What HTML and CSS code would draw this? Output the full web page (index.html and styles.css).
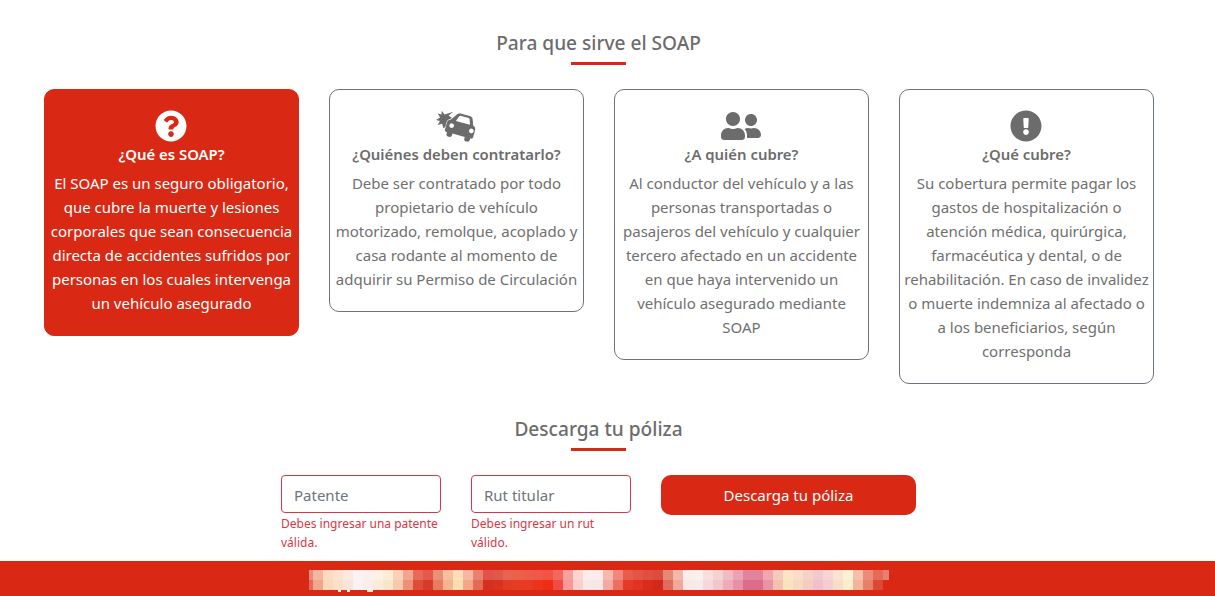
FILE: index.html
```html
<!DOCTYPE html>
<html lang="es">
<head>
<meta charset="utf-8">
<title>SOAP</title>
<link rel="stylesheet" href="styles.css">
</head>
<body>
<main class="page">
  <section class="usage">
    <h2 class="section-title">Para que sirve el SOAP</h2>
    <div class="cards">
      <article class="card card-active">
        <svg class="icon icon-round" viewBox="0 0 512 512" aria-hidden="true"><path d="M504 256c0 136.997-111.043 248-248 248S8 392.997 8 256C8 119.083 119.043 8 256 8s248 111.083 248 248zM262.655 90c-54.497 0-89.255 22.957-116.549 63.758-3.536 5.286-2.353 12.415 2.715 16.258l34.699 26.31c5.205 3.947 12.621 3.008 16.665-2.122 17.864-22.658 30.113-35.797 57.303-35.797 20.429 0 45.698 13.148 45.698 32.958 0 14.976-12.363 22.667-32.534 33.976C247.128 238.528 216 254.941 216 296v4c0 6.627 5.373 12 12 12h56c6.627 0 12-5.373 12-12v-1.333c0-28.462 83.186-29.647 83.186-106.667 0-58.002-60.165-102-116.531-102zM256 338c-25.365 0-46 20.635-46 46 0 25.364 20.635 46 46 46s46-20.636 46-46c0-25.365-20.635-46-46-46z"/></svg>
        <h3 class="card-title">¿Qué es SOAP?</h3>
        <p class="card-text">El SOAP es un seguro obligatorio,<br>que cubre la muerte y lesiones<br>corporales que sean consecuencia<br>directa de accidentes sufridos por<br>personas en los cuales intervenga<br>un vehículo asegurado</p>
      </article>
      <article class="card">
        <svg class="icon icon-wide" viewBox="0 0 40 32" aria-hidden="true">
          <polygon points="5.7,0.7 8.6,4.6 17.3,1.7 12.6,5.6 16,8 13,9.5 10.4,13 10.8,16 7.3,18.3 6.2,13.8 1.6,15 4,11 0,10 4,7.500 1.800,3.400 5.500,4.500"/>
          <g transform="translate(.6 0) rotate(15 25 18)"><path fill-rule="evenodd" d="M16.4 7.2C17 5.3 18.400 4.400 20.200 4.400h9.600c1.800 0 3.200.9 3.800 2.800l1.900 5.400c2 .6 3.100 2.200 3.100 4.200v7.200c0 1-.8 1.800-1.800 1.800h-.8v2c0 1.100-.9 2-2 2h-1.600c-1.100 0-2-.9-2-2v-2H17.600v2c0 1.100-.9 2-2 2H14c-1.100 0-2-.9-2-2v-2h-.8c-1 0-1.800-.8-1.800-1.800v-7.200c0-2 1.100-3.600 3.100-4.200zM19.600 7.300l-1.900 5.400h14.600l-1.900-5.400c-.2-.5-.6-.8-1.100-.8h-8.600c-.5 0-.9.3-1.100.8zM14.800 16a2.300 2.300 0 1 0 0 4.600 2.300 2.300 0 0 0 0-4.600zM35.200 16a2.300 2.300 0 1 0 0 4.600 2.300 2.300 0 0 0 0-4.600z"/></g>
        </svg>
        <h3 class="card-title">¿Quiénes deben contratarlo?</h3>
        <p class="card-text">Debe ser contratado por todo<br>propietario de vehículo<br>motorizado, remolque, acoplado y<br>casa rodante al momento de<br>adquirir su Permiso de Circulación</p>
      </article>
      <article class="card">
        <svg class="icon icon-wide" viewBox="0 0 640 512" aria-hidden="true"><path d="M192 256c61.9 0 112-50.1 112-112S253.9 32 192 32 80 82.1 80 144s50.1 112 112 112zm76.8 32h-8.3c-20.8 10-43.9 16-68.5 16s-47.6-6-68.5-16h-8.3C51.6 288 0 339.6 0 403.2V432c0 26.5 21.5 48 48 48h288c26.5 0 48-21.5 48-48v-28.8c0-63.6-51.6-115.2-115.2-115.2zM480 256c53 0 96-43 96-96s-43-96-96-96-96 43-96 96 43 96 96 96zm48 32h-3.8c-13.9 4.8-28.6 8-44.2 8s-30.3-3.2-44.2-8H432c-20.4 0-39.2 5.9-55.7 15.4 24.4 26.3 39.7 61.2 39.7 99.8v38.4c0 2.2-.5 4.3-.6 6.4H592c26.5 0 48-21.5 48-48 0-61.9-50.1-112-112-112z"/></svg>
        <h3 class="card-title">¿A quién cubre?</h3>
        <p class="card-text">Al conductor del vehículo y a las<br>personas transportadas o<br>pasajeros del vehículo y cualquier<br>tercero afectado en un accidente<br>en que haya intervenido un<br>vehículo asegurado mediante<br>SOAP</p>
      </article>
      <article class="card">
        <svg class="icon icon-round" viewBox="0 0 512 512" aria-hidden="true"><path d="M504 256c0 136.997-111.043 248-248 248S8 392.997 8 256C8 119.083 119.043 8 256 8s248 111.083 248 248zm-248 50c-25.405 0-46 20.595-46 46s20.595 46 46 46 46-20.595 46-46-20.595-46-46-46zm-43.673-165.346l7.418 136c.347 6.364 5.609 11.346 11.982 11.346h48.546c6.373 0 11.635-4.982 11.982-11.346l7.418-136c.375-6.874-5.098-12.654-11.982-12.654h-63.383c-6.884 0-12.356 5.78-11.981 12.654z"/></svg>
        <h3 class="card-title">¿Qué cubre?</h3>
        <p class="card-text">Su cobertura permite pagar los<br>gastos de hospitalización o<br>atención médica, quirúrgica,<br>farmacéutica y dental, o de<br>rehabilitación. En caso de invalidez<br>o muerte indemniza al afectado o<br>a los beneficiarios, según<br>corresponda</p>
      </article>
    </div>
  </section>
  <section class="download">
    <h2 class="section-title">Descarga tu póliza</h2>
    <form class="download-form">
      <div class="field">
        <input class="field-input" type="text" placeholder="Patente">
        <p class="field-error">Debes ingresar una patente válida.</p>
      </div>
      <div class="field">
        <input class="field-input" type="text" placeholder="Rut titular">
        <p class="field-error">Debes ingresar un rut válido.</p>
      </div>
      <button class="download-button" type="button">Descarga tu póliza</button>
    </form>
  </section>
</main>
<footer class="footer">
  <svg class="footer-blur" viewBox="0 0 580 23" aria-hidden="true" shape-rendering="crispEdges">
    <g>
    <rect x="0" width="4" height="10" fill="#e88c7e"/><rect x="4" width="10" height="10" fill="#f4b6a0"/><rect x="14" width="10" height="10" fill="#fbdcc0"/><rect x="24" width="10" height="10" fill="#fde2d0"/><rect x="34" width="10" height="10" fill="#fbeae2"/><rect x="44" width="10" height="10" fill="#faf3f4"/><rect x="54" width="10" height="10" fill="#faf0ef"/><rect x="64" width="10" height="10" fill="#fdf0e4"/><rect x="74" width="10" height="10" fill="#fdecd6"/><rect x="84" width="10" height="10" fill="#f9d0b8"/><rect x="94" width="10" height="10" fill="#f2a590"/><rect x="104" width="10" height="10" fill="#e66a58"/><rect x="114" width="10" height="10" fill="#e35a4c"/><rect x="124" width="10" height="10" fill="#ea9078"/><rect x="134" width="10" height="10" fill="#f6c0a0"/><rect x="144" width="10" height="10" fill="#fde0b8"/><rect x="154" width="10" height="10" fill="#f6b8a0"/><rect x="164" width="10" height="10" fill="#ea8070"/><rect x="174" width="10" height="10" fill="#e0524a"/><rect x="184" width="10" height="10" fill="#e05a4c"/><rect x="194" width="10" height="10" fill="#e86450"/><rect x="204" width="10" height="10" fill="#ea6048"/><rect x="214" width="10" height="10" fill="#ec5c48"/><rect x="224" width="10" height="10" fill="#f0584a"/><rect x="234" width="10" height="10" fill="#f25442"/><rect x="244" width="10" height="10" fill="#f06860"/><rect x="254" width="10" height="10" fill="#f8a0a0"/><rect x="264" width="10" height="10" fill="#fcd4d0"/><rect x="274" width="10" height="10" fill="#fdeeea"/><rect x="284" width="10" height="10" fill="#fdeceb"/><rect x="294" width="10" height="10" fill="#f7b9ae"/><rect x="304" width="10" height="10" fill="#f0897c"/><rect x="314" width="10" height="10" fill="#e95c4a"/><rect x="324" width="10" height="10" fill="#e35644"/><rect x="334" width="10" height="10" fill="#e05040"/><rect x="344" width="10" height="10" fill="#dc4c3c"/><rect x="354" width="10" height="10" fill="#e68a78"/><rect x="364" width="10" height="10" fill="#f2b8aa"/><rect x="374" width="10" height="10" fill="#fbeeea"/><rect x="384" width="10" height="10" fill="#faf0ee"/><rect x="394" width="10" height="10" fill="#f9dde0"/><rect x="404" width="10" height="10" fill="#f5d2d2"/><rect x="414" width="10" height="10" fill="#f0bcc4"/><rect x="424" width="10" height="10" fill="#eba2b4"/><rect x="434" width="10" height="10" fill="#e2849c"/><rect x="444" width="10" height="10" fill="#e2849c"/><rect x="454" width="10" height="10" fill="#efa8b0"/><rect x="464" width="10" height="10" fill="#f6cabc"/><rect x="474" width="10" height="10" fill="#fde6c8"/><rect x="484" width="10" height="10" fill="#fadcc8"/><rect x="494" width="10" height="10" fill="#f7d2c8"/><rect x="504" width="10" height="10" fill="#f4c8d0"/><rect x="514" width="10" height="10" fill="#f8d4d4"/><rect x="524" width="10" height="10" fill="#fce2d0"/><rect x="534" width="10" height="10" fill="#fef0d4"/><rect x="544" width="10" height="10" fill="#f4c0a8"/><rect x="554" width="10" height="10" fill="#ec8c78"/><rect x="564" width="10" height="10" fill="#e66a58"/><rect x="574" width="6" height="10" fill="#e88070"/>
    </g>
    <g transform="translate(0 10)">
    <rect x="0" width="4" height="10" fill="#e6695a"/><rect x="4" width="10" height="10" fill="#f2a68e"/><rect x="14" width="10" height="10" fill="#fad9b8"/><rect x="24" width="10" height="10" fill="#fcdfc8"/><rect x="34" width="10" height="10" fill="#f9e4dc"/><rect x="44" width="10" height="10" fill="#f9f1f2"/><rect x="54" width="10" height="10" fill="#f8eeec"/><rect x="64" width="10" height="10" fill="#fcebdc"/><rect x="74" width="10" height="10" fill="#fce4cc"/><rect x="84" width="10" height="10" fill="#f8c8ac"/><rect x="94" width="10" height="10" fill="#ee9078"/><rect x="104" width="10" height="10" fill="#dd4e38"/><rect x="114" width="10" height="10" fill="#d63a28"/><rect x="124" width="10" height="10" fill="#e87c60"/><rect x="134" width="10" height="10" fill="#f5b490"/><rect x="144" width="10" height="10" fill="#fcdcb0"/><rect x="154" width="10" height="10" fill="#f3a688"/><rect x="164" width="10" height="10" fill="#e46a56"/><rect x="174" width="10" height="10" fill="#d4301f"/><rect x="184" width="10" height="10" fill="#d83220"/><rect x="194" width="10" height="10" fill="#e23c24"/><rect x="204" width="10" height="10" fill="#e63c24"/><rect x="214" width="10" height="10" fill="#e83a24"/><rect x="224" width="10" height="10" fill="#ee3418"/><rect x="234" width="10" height="10" fill="#f02c14"/><rect x="244" width="10" height="10" fill="#ee4c44"/><rect x="254" width="10" height="10" fill="#f89898"/><rect x="264" width="10" height="10" fill="#fbd0cc"/><rect x="274" width="10" height="10" fill="#fbe8e4"/><rect x="284" width="10" height="10" fill="#fce6e2"/><rect x="294" width="10" height="10" fill="#f6a9a0"/><rect x="304" width="10" height="10" fill="#ee6f62"/><rect x="314" width="10" height="10" fill="#e63a28"/><rect x="324" width="10" height="10" fill="#e23222"/><rect x="334" width="10" height="10" fill="#d92c1c"/><rect x="344" width="10" height="10" fill="#d42818"/><rect x="354" width="10" height="10" fill="#e16b5c"/><rect x="364" width="10" height="10" fill="#f0a89c"/><rect x="374" width="10" height="10" fill="#f9e8e4"/><rect x="384" width="10" height="10" fill="#f8eaea"/><rect x="394" width="10" height="10" fill="#f8d6da"/><rect x="404" width="10" height="10" fill="#f3c6ca"/><rect x="414" width="10" height="10" fill="#eeacb8"/><rect x="424" width="10" height="10" fill="#e890a8"/><rect x="434" width="10" height="10" fill="#dc6c8c"/><rect x="444" width="10" height="10" fill="#dc6c8c"/><rect x="454" width="10" height="10" fill="#e894a4"/><rect x="464" width="10" height="10" fill="#f5c0ae"/><rect x="474" width="10" height="10" fill="#fde2c0"/><rect x="484" width="10" height="10" fill="#f8d8c0"/><rect x="494" width="10" height="10" fill="#f6ccc0"/><rect x="504" width="10" height="10" fill="#f2c0cc"/><rect x="514" width="10" height="10" fill="#f6ccd0"/><rect x="524" width="10" height="10" fill="#fbdcc8"/><rect x="534" width="10" height="10" fill="#fdeccc"/><rect x="544" width="10" height="10" fill="#f2b49c"/><rect x="554" width="10" height="10" fill="#e88068"/><rect x="564" width="10" height="10" fill="#dd4836"/>
    </g>
    <rect x="29" y="20" width="3" height="1.5" fill="#fbe9c8"/><rect x="38" y="20" width="3" height="1.5" fill="#fbe9c8"/><rect x="58" y="20" width="6" height="1.5" fill="#fbe9c8"/>
  </svg>
</footer>
</body>
</html>
```
FILE: styles.css
```css
* { box-sizing: border-box; }
html, body { margin: 0; padding: 0; }
body {
  font-family: "Noto Sans", "Open Sans", sans-serif;
  font-size: 15px;
  line-height: 24px;
  color: #707070;
  background: #fff;
  height: 596px;
  overflow: hidden;
  display: flex;
  flex-direction: column;
}
.page { flex: 1; padding-right: 17px; }
.usage { width: 1110px; margin: 0 auto; padding-top: 30px; }
.section-title {
  margin: 0 auto;
  padding-right: 1px;
  text-align: center;
  font-size: 19.1px;
  font-weight: 500;
  line-height: 26px;
  color: #6c6c6c;
}
.section-title::after {
  content: "";
  display: block;
  width: 55px;
  height: 3px;
  margin: 6px auto 0;
  background: #d92914;
}
.cards { display: flex; align-items: flex-start; gap: 30px; margin-top: 24px; }
.card {
  flex: 0 0 255px;
  border: 1px solid #6c757d;
  border-radius: 10px;
  padding: 20px 4px 20px;
  text-align: center;
}
.card-active { background: #d92914; border-color: #d92914; color: #fff; }
.card-active .card-title { color: #fff; }
.card-active .icon { fill: #fff; }
.icon { display: block; height: 32px; fill: #6c6c6c; }
.icon-round { width: 32px; margin-left: 106px; }
.icon-wide { width: 40px; margin-left: 102px; }
.icon-wide g path { stroke: #fff; stroke-width: 1; paint-order: stroke; }
.card-title { margin: 0 0 5px; font-size: 14.9px; font-weight: 600; line-height: 24px; color: #6c6c6c; }
.card-text { margin: 0; white-space: nowrap; }
.download { width: 636px; margin: 32px auto 0; }
.download-form { display: flex; align-items: flex-start; gap: 30px; margin-top: 24px; }
.field { flex: 0 0 160px; }
.field-input {
  display: block;
  width: 100%;
  height: 38px;
  padding: 1px 12px 0;
  border: 1px solid #dc3545;
  border-radius: 4px;
  font: 15px/24px "Noto Sans", "Open Sans", sans-serif;
  color: #495057;
  background: #fff;
}
.field-input::placeholder { color: #6c757d; opacity: 1; }
.field-error { margin: 1px 0 0; font-size: 12px; line-height: 19px; color: #dc3545; }
.download-button {
  flex: 0 0 255px;
  height: 40px;
  border: 0;
  border-radius: 10px;
  background: #d92914;
  color: #fff;
  font: 400 15px/24px "Noto Sans", "Open Sans", sans-serif;
}
.footer { flex: 0 0 35px; background: #d92914; display: flex; justify-content: center; padding-top: 9px; }
.footer-blur { display: block; width: 580px; height: 23px; margin-right: 17px; }
```
